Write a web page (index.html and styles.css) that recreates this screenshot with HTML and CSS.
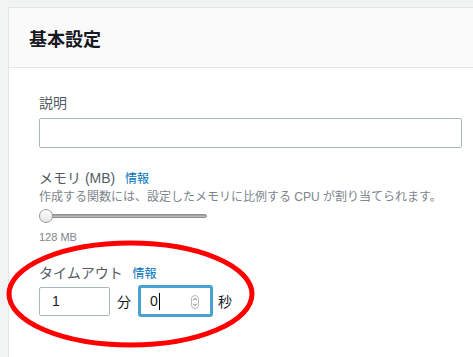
FILE: index.html
```html
<!DOCTYPE html>
<html lang="ja">
<head>
    <meta charset="UTF-8">
    <title>基本設定</title>
    <link rel="stylesheet" href="styles.css">
</head>
<body>
    <div class="page">
        <div class="panel">
            <div class="panel-header">
                <h2>基本設定</h2>
            </div>
            <div class="panel-body">
                <div class="field">
                    <label class="label" for="description">説明</label>
                    <input class="text-input wide" type="text" id="description">
                </div>

                <div class="field memory">
                    <div class="label">メモリ (MB) <a class="info" href="#">情報</a></div>
                    <div class="hint">作成する関数には、設定したメモリに比例する CPU が割り当てられます。</div>
                    <div class="slider">
                        <div class="track"></div>
                        <div class="thumb"></div>
                    </div>
                    <div class="value">128 MB</div>
                </div>

                <div class="field timeout">
                    <div class="label">タイムアウト <a class="info" href="#">情報</a></div>
                    <div class="time-row">
                        <input class="text-input minutes" type="text" value="1">
                        <span class="unit">分</span>
                        <div class="text-input seconds focused">
                            <span>0</span><span class="caret"></span>
                            <svg class="spinner" width="8" height="14" viewBox="0 0 8 14">
                                <rect x="0.5" y="0.5" width="7" height="13" rx="3.5" fill="#fff" stroke="#b8b8b8"/>
                                <path d="M2.3 5.2 L4 3.4 L5.7 5.2" fill="none" stroke="#555" stroke-width="0.9"/>
                                <path d="M2.3 8.8 L4 10.6 L5.7 8.8" fill="none" stroke="#555" stroke-width="0.9"/>
                            </svg>
                        </div>
                        <span class="unit">秒</span>
                    </div>
                </div>
            </div>
        </div>
    </div>

    <!-- 赤丸の注釈 -->
    <svg class="mark" width="473" height="357" viewBox="0 0 473 357">
        <ellipse cx="130.5" cy="294" rx="121.5" ry="51" fill="none" stroke="#ff0000" stroke-width="5"/>
    </svg>
</body>
</html>
```

FILE: styles.css
```css
html, body {
    height: 100%;
}
body {
    margin: 0;
    background: #f2f3f3;
    font-family: "Liberation Sans", "Noto Sans CJK JP", sans-serif;
    color: #545b64;
    overflow: hidden;
    position: relative;
}
.page {
    box-sizing: border-box;
    height: 100%;
    padding: 7px 0 0 8px;
}
.panel {
    width: 485px;
    height: 100%;
    background: #fff;
    border: 1px solid #e3e5e6;
    border-bottom: none;
}
.panel-header {
    height: 59px;
    background: #fafafa;
    border-bottom: 1px solid #e3e6e6;
    display: flex;
    align-items: center;
    padding-left: 20px;
}
.panel-header h2 {
    margin: 0;
    font-size: 18px;
    font-weight: bold;
    color: #16191f;
}
.panel-body {
    padding: 25px 31px 0 30px;
}
.label {
    display: block;
    font-size: 14px;
    line-height: 20px;
    color: #545b64;
}
.info {
    font-size: 12px;
    color: #0073bb;
    text-decoration: none;
    margin-left: 6px;
}
.text-input {
    box-sizing: border-box;
    height: 30px;
    border: 1px solid #aab7b8;
    border-radius: 2px;
    background: #fff;
    font-family: inherit;
    font-size: 14px;
    color: #16191f;
    padding: 0 12px;
}
.wide {
    display: block;
    width: 423px;
    margin-top: 5px;
}
.memory {
    margin-top: 20px;
}
.hint {
    font-size: 12px;
    line-height: 16px;
    color: #7d858d;
}
.slider {
    position: relative;
    width: 168px;
    height: 18px;
    margin-top: 2px;
    display: flex;
    align-items: center;
}
.track {
    width: 100%;
    height: 4px;
    border-radius: 2px;
    background: linear-gradient(#9a9a9a, #c4c4c4);
    border: 1px solid #8f8f8f;
    box-sizing: border-box;
}
.thumb {
    position: absolute;
    left: 0;
    top: 2px;
    width: 14px;
    height: 14px;
    box-sizing: border-box;
    border-radius: 50%;
    border: 1px solid #9b9b9b;
    background: linear-gradient(#ffffff, #e6e6e6);
}
.value {
    font-size: 11px;
    line-height: 14px;
    margin-top: 5px;
    color: #7d858d;
}
.timeout {
    margin-top: 19px;
}
.time-row {
    display: flex;
    align-items: center;
    margin-top: 1px;
}
.minutes {
    width: 71px;
    height: 29px;
}
.unit {
    font-size: 14px;
    color: #16191f;
    margin: 0 7px 0 7px;
}
.unit:last-child {
    margin: 0 0 0 5px;
}
.seconds {
    width: 75px;
    height: 32px;
    border: 3px solid #48a2cf;
    border-radius: 3px;
    display: flex;
    align-items: center;
    padding: 0 0 0 9px;
    position: relative;
}
.caret {
    display: inline-block;
    width: 1px;
    height: 17px;
    background: #000;
    margin-left: 1px;
}
.spinner {
    position: absolute;
    right: 11px;
    top: 7px;
}
.mark {
    position: absolute;
    left: 0;
    top: 0;
    pointer-events: none;
}
```
